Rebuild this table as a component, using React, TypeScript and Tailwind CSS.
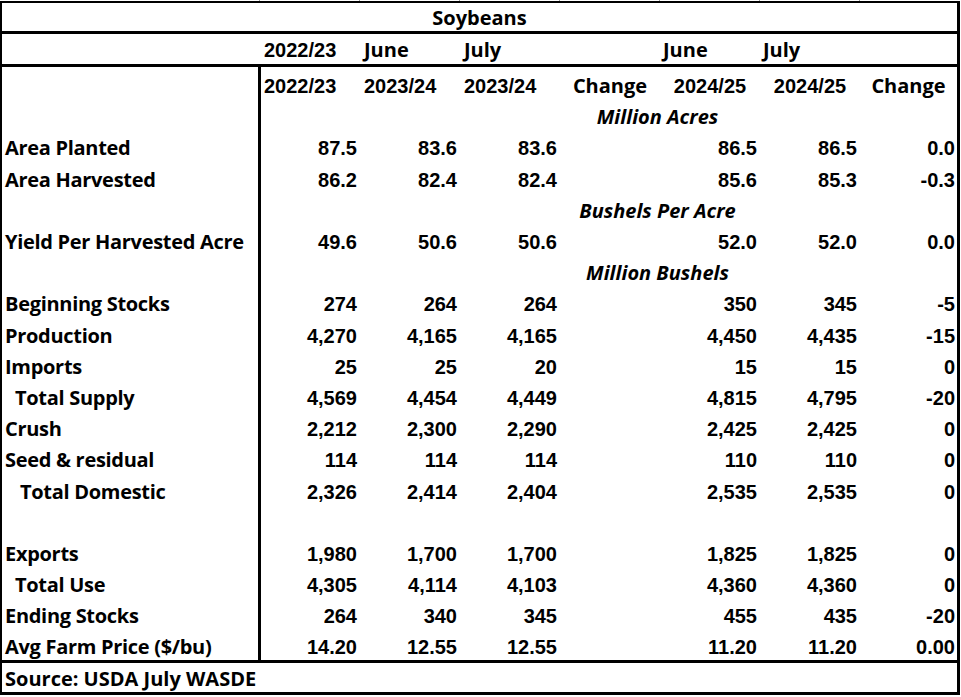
import React from "react";

const LF = "font-['Open_Sans',sans-serif] font-bold text-[20px] leading-[20px] text-black";
const NF = "font-['Liberation_Sans',Arial,sans-serif] font-bold text-[20px] leading-[20px] text-black";

const COLW = ["w-[99px]", "w-[100px]", "w-[100px]", "w-[100px]", "w-[100px]", "w-[100px]", "w-[97px]"];

type DataRow = { label: string; pad: string; vals: string[] };

const rows1: DataRow[] = [
  { label: "Area Planted", pad: "pl-[3px]", vals: ["87.5", "83.6", "83.6", "", "86.5", "86.5", "0.0"] },
  { label: "Area Harvested", pad: "pl-[3px]", vals: ["86.2", "82.4", "82.4", "", "85.6", "85.3", "-0.3"] },
];
const rows2: DataRow[] = [
  { label: "Yield Per Harvested Acre", pad: "pl-[3px]", vals: ["49.6", "50.6", "50.6", "", "52.0", "52.0", "0.0"] },
];
const rows3: DataRow[] = [
  { label: "Beginning Stocks", pad: "pl-[3px]", vals: ["274", "264", "264", "", "350", "345", "-5"] },
  { label: "Production", pad: "pl-[3px]", vals: ["4,270", "4,165", "4,165", "", "4,450", "4,435", "-15"] },
  { label: "Imports", pad: "pl-[3px]", vals: ["25", "25", "20", "", "15", "15", "0"] },
  { label: "Total Supply", pad: "pl-[13px]", vals: ["4,569", "4,454", "4,449", "", "4,815", "4,795", "-20"] },
  { label: "Crush", pad: "pl-[3px]", vals: ["2,212", "2,300", "2,290", "", "2,425", "2,425", "0"] },
  { label: "Seed & residual", pad: "pl-[3px]", vals: ["114", "114", "114", "", "110", "110", "0"] },
  { label: "Total Domestic", pad: "pl-[18px]", vals: ["2,326", "2,414", "2,404", "", "2,535", "2,535", "0"] },
  { label: "", pad: "pl-[3px]", vals: ["", "", "", "", "", "", ""] },
  { label: "Exports", pad: "pl-[3px]", vals: ["1,980", "1,700", "1,700", "", "1,825", "1,825", "0"] },
  { label: "Total Use", pad: "pl-[13px]", vals: ["4,305", "4,114", "4,103", "", "4,360", "4,360", "0"] },
  { label: "Ending Stocks", pad: "pl-[3px]", vals: ["264", "340", "345", "", "455", "435", "-20"] },
  { label: "Avg Farm Price ($/bu)", pad: "pl-[3px]", vals: ["14.20", "12.55", "12.55", "", "11.20", "11.20", "0.00"] },
];

function LabelCell({ children, pad }: { children?: React.ReactNode; pad: string }) {
  return (
    <div className={`w-[259px] shrink-0 border-r-[3px] border-black flex items-center pt-[7px] whitespace-nowrap tracking-[-0.3px] ${pad} ${LF}`}>
      {children}
    </div>
  );
}

function Row({ r }: { r: DataRow }) {
  return (
    <div className="flex h-[31.2px]">
      <LabelCell pad={r.pad}>{r.label}</LabelCell>
      {r.vals.map((v, i) => (
        <div
          key={i}
          className={`${COLW[i]} shrink-0 flex items-center justify-end pt-[7px] ${i === 6 ? "pr-[2px]" : "pr-[3px]"} whitespace-nowrap ${NF}`}
        >
          {v}
        </div>
      ))}
    </div>
  );
}

function Section({ title }: { title: string }) {
  return (
    <div className="flex h-[31.2px]">
      <LabelCell pad="pl-[3px]" />
      <div className="w-[299px] shrink-0" />
      <div className={`w-[200px] shrink-0 flex items-center justify-center pt-[7px] pr-[5px] italic whitespace-nowrap ${LF}`}>
        {title}
      </div>
      <div className="w-[197px] shrink-0" />
    </div>
  );
}

export default function App() {
  return (
    <div className="w-[961px] h-[697px] bg-white overflow-hidden">
      {/* gridline ticks */}
      <div className="flex h-px">
        <div className="w-[259px]" />
        <div className="w-px bg-[#9a9a9a]" />
        <div className="w-[99px]" />
        <div className="w-px bg-[#9a9a9a]" />
        <div className="w-[99px]" />
        <div className="w-px bg-[#9a9a9a]" />
        <div className="w-[99px]" />
        <div className="w-px bg-[#9a9a9a]" />
        <div className="w-[99px]" />
        <div className="w-px bg-[#9a9a9a]" />
        <div className="w-[99px]" />
        <div className="w-px bg-[#9a9a9a]" />
        <div className="w-[99px]" />
        <div className="w-px bg-[#9a9a9a]" />
      </div>

      <div className="w-[960px] border-t-2 border-l-2 border-r-[3px] border-b-[3px] border-black">
        {/* title */}
        <div className={`h-[28px] flex items-center justify-center pt-[1px] ${LF}`}>Soybeans</div>
        <div className="h-[3px] bg-black" />

        {/* header row 1 */}
        <div className="flex h-[30px]">
          <div className="w-[259px] shrink-0" />
          <div className={`w-[99px] shrink-0 flex items-center pt-[2px] pl-[3px] ${NF}`}>2022/23</div>
          <div className={`w-[100px] shrink-0 flex items-center pt-[2px] pl-[4px] ${LF}`}>June</div>
          <div className={`w-[100px] shrink-0 flex items-center pt-[2px] pl-[4px] ${LF}`}>July</div>
          <div className="w-[100px] shrink-0" />
          <div className={`w-[100px] shrink-0 flex items-center pt-[2px] pl-[3px] ${LF}`}>June</div>
          <div className={`w-[100px] shrink-0 flex items-center pt-[2px] pl-[3px] ${LF}`}>July</div>
          <div className="w-[97px] shrink-0" />
        </div>
        <div className="h-[3px] bg-black" />

        {/* header row 2 */}
        <div className="flex h-[31.2px]">
          <LabelCell pad="pl-[3px]" />
          <div className={`w-[99px] shrink-0 flex items-center pt-[7px] pl-[3px] ${NF}`}>2022/23</div>
          <div className={`w-[100px] shrink-0 flex items-center pt-[7px] pl-[4px] ${NF}`}>2023/24</div>
          <div className={`w-[100px] shrink-0 flex items-center pt-[7px] pl-[4px] ${NF}`}>2023/24</div>
          <div className={`w-[100px] shrink-0 flex items-center justify-center pt-[7px] ${LF}`}>Change</div>
          <div className={`w-[100px] shrink-0 flex items-center justify-center pt-[7px] ${NF}`}>2024/25</div>
          <div className={`w-[100px] shrink-0 flex items-center justify-center pt-[7px] ${NF}`}>2024/25</div>
          <div className={`w-[97px] shrink-0 flex items-center justify-center pt-[7px] ${LF}`}>Change</div>
        </div>

        <Section title="Million Acres" />
        {rows1.map((r, i) => (
          <Row key={"a" + i} r={r} />
        ))}
        <Section title="Bushels Per Acre" />
        {rows2.map((r, i) => (
          <Row key={"b" + i} r={r} />
        ))}
        <Section title="Million Bushels" />
        {rows3.map((r, i) => (
          <Row key={"c" + i} r={r} />
        ))}

        <div className="h-[3px] bg-black" />
        {/* source */}
        <div className={`h-[29px] flex items-center pt-[3px] pl-[3px] ${LF}`}>Source: USDA July WASDE</div>
      </div>
    </div>
  );
}
